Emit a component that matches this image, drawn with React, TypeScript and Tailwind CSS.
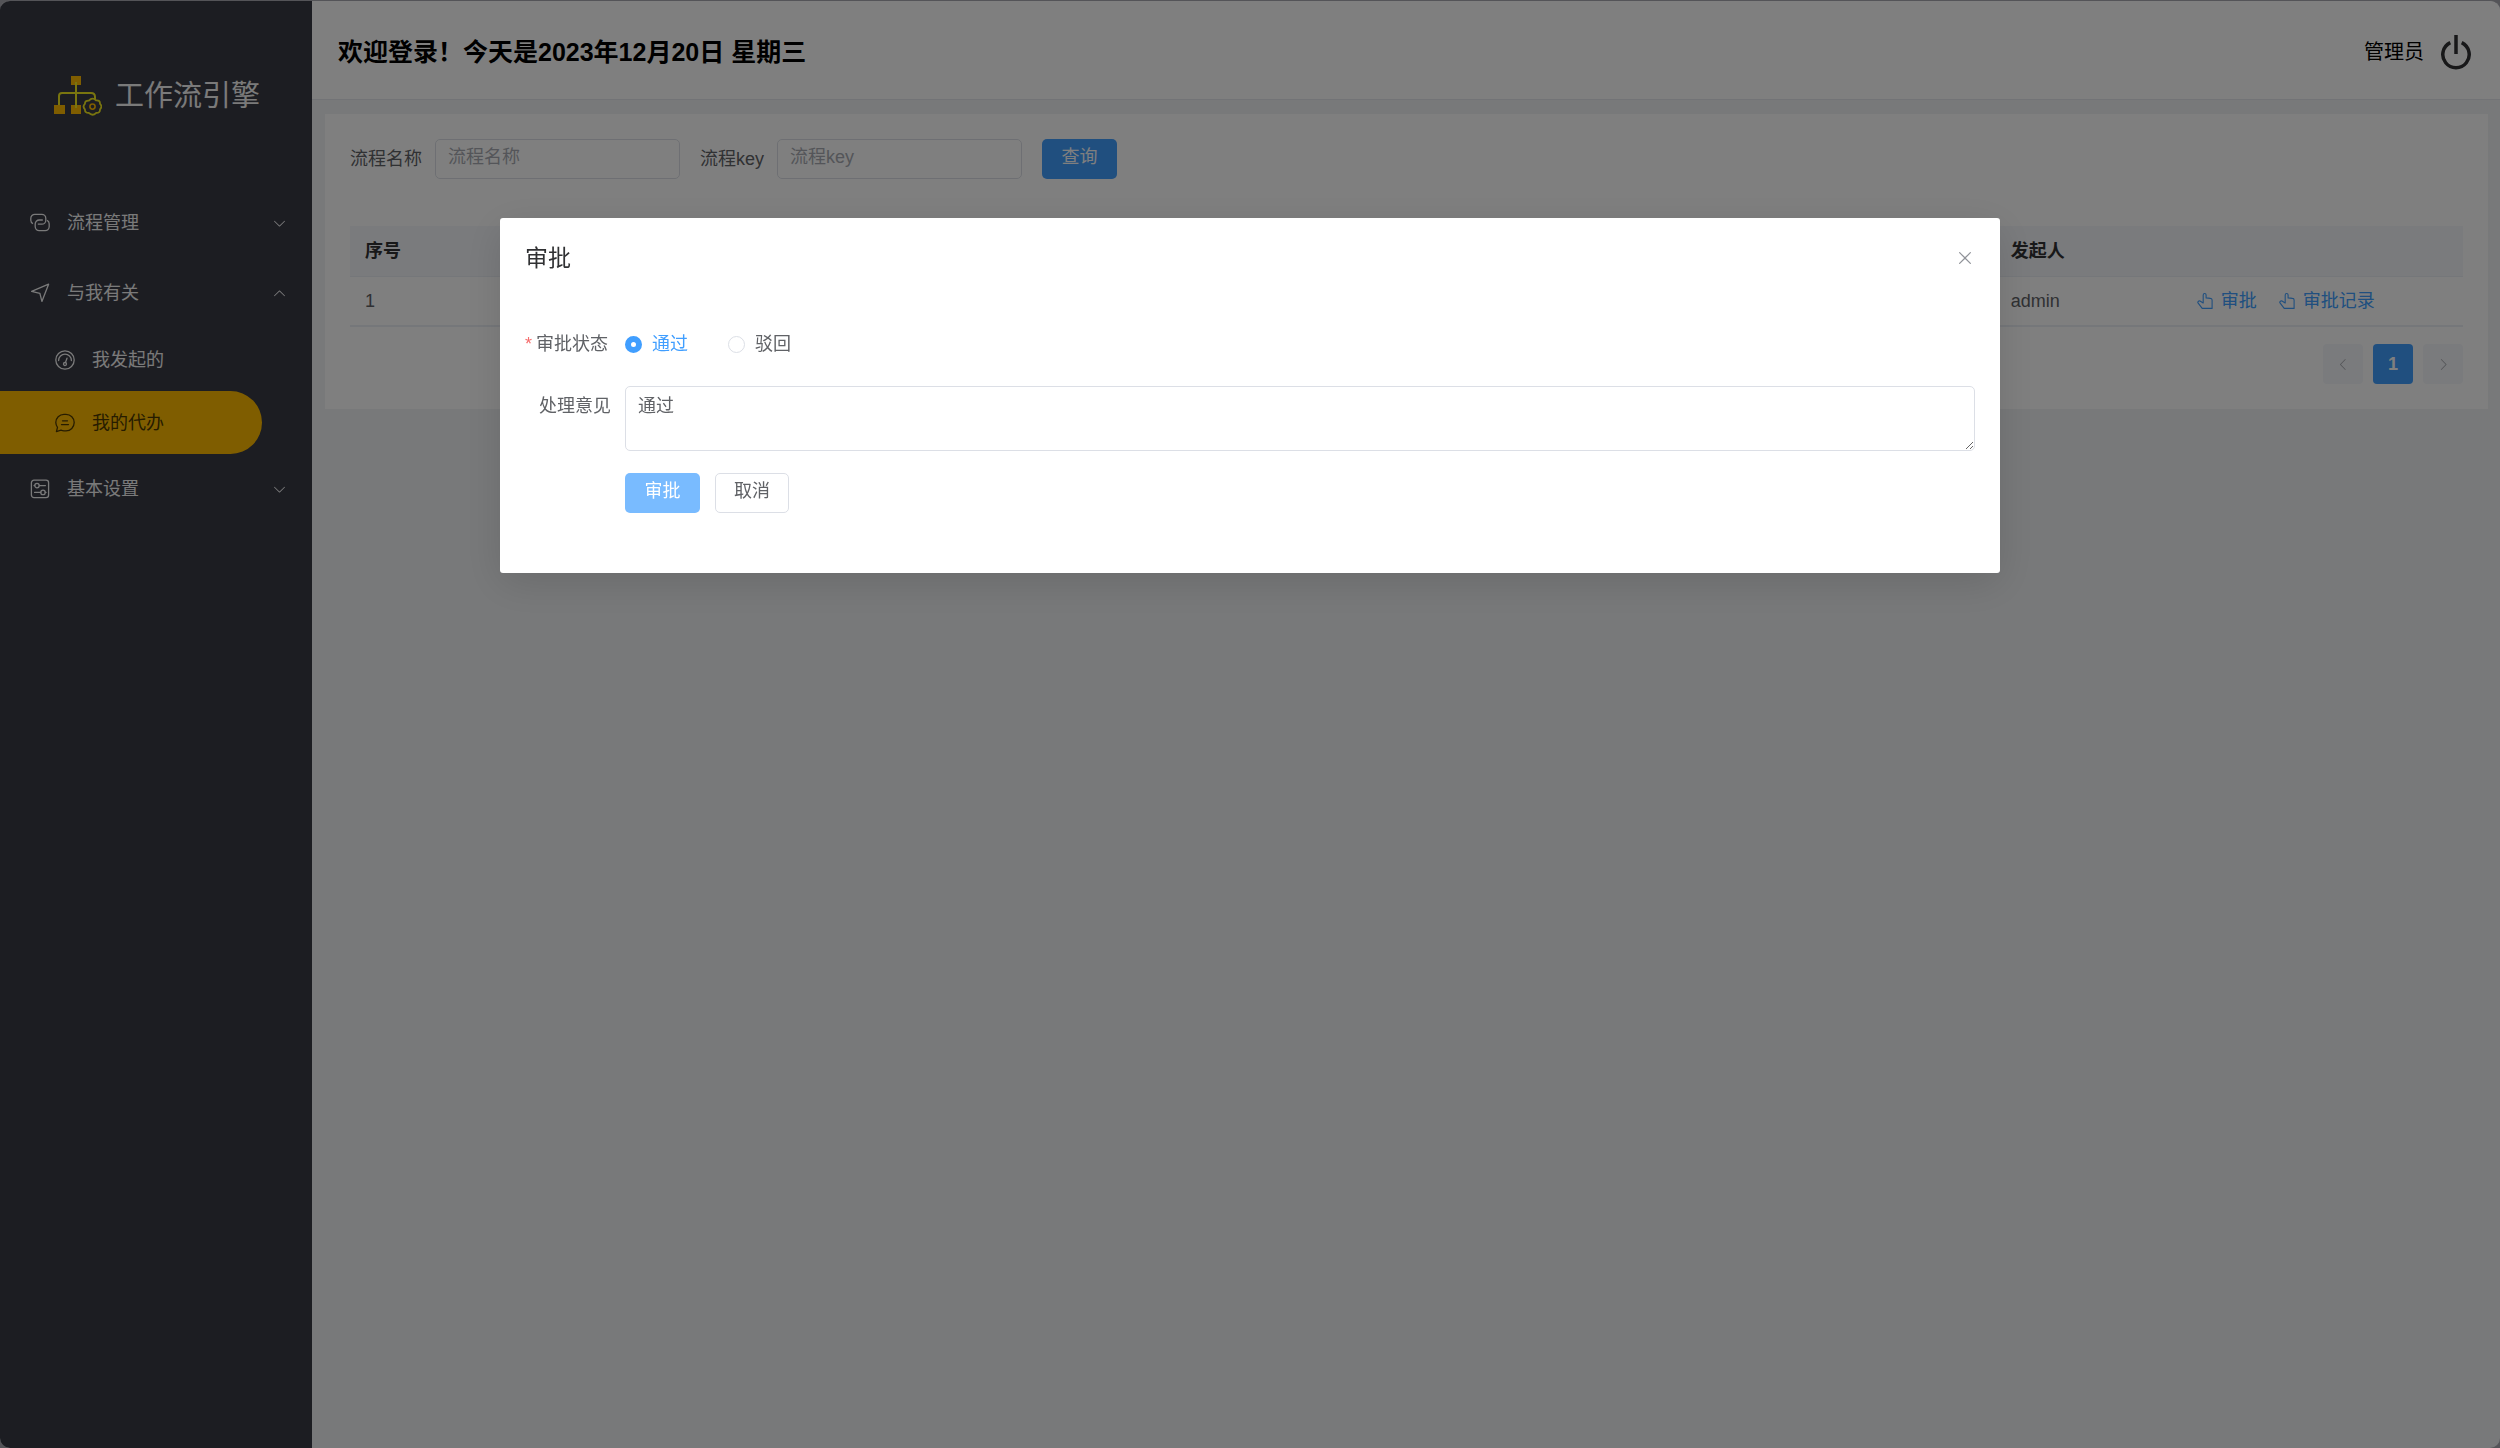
import { useState } from "react";
import type { ReactNode } from "react";

function Icon({ className, d }: { className: string; d: string }) {
  return (
    <svg viewBox="0 0 1024 1024" fill="currentColor" aria-hidden="true" className={className}>
      <path d={d} />
    </svg>
  );
}

const ARROW_DOWN = "M831.872 340.864 512 652.672 192.128 340.864a30.592 30.592 0 0 0-42.752 0 29.12 29.12 0 0 0 0 41.6L489.664 714.24a32 32 0 0 0 44.672 0l340.288-331.712a29.12 29.12 0 0 0 0-41.728 30.592 30.592 0 0 0-42.752 0z";
const ARROW_LEFT = "M609.408 149.376 277.76 489.6a32 32 0 0 0 0 44.672l331.648 340.352a29.12 29.12 0 0 0 41.728 0 30.592 30.592 0 0 0 0-42.752L339.264 511.936l311.872-319.872a30.592 30.592 0 0 0 0-42.688 29.12 29.12 0 0 0-41.728 0z";
const ARROW_RIGHT = "M340.864 149.312a30.592 30.592 0 0 0 0 42.752L652.736 512 340.864 831.872a30.592 30.592 0 0 0 0 42.752 29.12 29.12 0 0 0 41.728 0L714.24 534.336a32 32 0 0 0 0-44.672L382.592 149.376a29.12 29.12 0 0 0-41.728 0z";
const CLOSE = "M764.288 214.592 512 466.88 259.712 214.592a31.936 31.936 0 0 0-45.12 45.12L466.752 512 214.528 764.224a31.936 31.936 0 1 0 45.12 45.184L512 557.184l252.288 252.288a31.936 31.936 0 0 0 45.12-45.12L557.12 512.064l252.288-252.352a31.936 31.936 0 1 0-45.12-45.184z";

const navIcon = "size-5 shrink-0";

function LinkIcon() {
  return (
    <svg viewBox="0 0 20 20" fill="none" stroke="currentColor" strokeWidth="1.3" aria-hidden="true" className={navIcon}>
      <path d="M3 10.6A3.800 3.800 0 0 1 .8 7.200V5.400a4 4 0 0 1 4-4h7a4 4 0 0 1 4 4v1.800a4 4 0 0 1-4 4H7.800" />
      <path d="M17 7.400a3.800 3.800 0 0 1 2.200 3.400v2.800a4 4 0 0 1-4 4h-6a4 4 0 0 1-4-4V11a4 4 0 0 1 4-4h3.600" />
    </svg>
  );
}

function SendIcon() {
  return (
    <svg viewBox="0 0 20 20" fill="none" stroke="currentColor" strokeWidth="1.3" strokeLinejoin="round" aria-hidden="true" className={navIcon}>
      <path d="M1.6 8.4 18.6 1.2 11.9 18.4 9.9 10.3Z" />
    </svg>
  );
}

function GaugeIcon() {
  return (
    <svg viewBox="0 0 20 20" fill="none" stroke="currentColor" strokeWidth="1.3" strokeLinecap="round" aria-hidden="true" className={navIcon}>
      <circle cx="10" cy="10" r="9.2" />
      <path d="M3.6 10.6a6.4 6.4 0 0 1 12.8 0" />
      <circle cx="10" cy="14" r="1.5" />
      <path d="M10.5 12.4 12 8.2" />
    </svg>
  );
}

function ChatIcon() {
  return (
    <svg viewBox="0 0 20 20" fill="none" stroke="currentColor" strokeWidth="1.3" strokeLinecap="round" strokeLinejoin="round" aria-hidden="true" className={navIcon}>
      <path d="M2.5 14.3A8 8 0 0 1 .8 9.6C.8 5 4.4 1.4 9 1.4h2c4.6 0 8.2 3.6 8.2 8.2S15.6 17.8 11 17.8H9a9 9 0 0 1-3-.6L1.4 18.6Z" />
      <path d="M7.500 7.800h5M6.500 11.600h7" />
    </svg>
  );
}

function SetIcon() {
  return (
    <svg viewBox="0 0 20 20" fill="none" stroke="currentColor" strokeWidth="1.3" strokeLinecap="round" aria-hidden="true" className={navIcon}>
      <rect x="1.4" y="1.2" width="17.2" height="17.4" rx="2.6" />
      <circle cx="7" cy="6.6" r="2.2" />
      <circle cx="13" cy="13.4" r="2.2" />
      <path d="M9.400 6.600h6M4.600 13.400h6M4 6.600h.6M15.400 13.400h.6" />
    </svg>
  );
}

function PointerIcon() {
  return (
    <svg viewBox="0 0 16 16" fill="none" stroke="currentColor" strokeWidth="1.1" strokeLinejoin="round" aria-hidden="true" className="size-4">
      <path d="M6.200 10V2a1.400 1.400 0 0 1 2.900 0v2.900l4.400.5a1.700 1.700 0 0 1 1.600 1.700v8.300H5.200L.8 9.700A1.600 1.600 0 0 1 3 8Z" />
    </svg>
  );
}

function Logo() {
  return (
    <svg viewBox="0 0 48 40" fill="none" aria-hidden="true" className="h-10 w-12 shrink-0">
      <path fill="#ffbb00" d="M17 0h10v9H17zM0 29h11v9H0zM17 29h10v9H17z" />
      <path stroke="#f2ea1e" strokeWidth="2" d="M22 6v26M5 29V20q0-3 3-3h29q4 0 4 4v2" />
      <path
        stroke="#f2ea1e"
        strokeWidth="1.8"
        strokeLinejoin="round"
        fill="#383a44"
        d="M34.9 24.6Q38.5 20.8 42 24.4Q46.2 24 46 27.8Q48.8 30.5 46 33.4Q46.2 37 42.2 36.8Q38.5 40.5 34.8 36.9Q31 37.2 30.9 33.4Q28.2 30.6 30.9 27.8Q31 24.4 34.9 24.6Z"
      />
      <circle cx="38.5" cy="30.6" r="2.6" stroke="#ffbb00" strokeWidth="1.6" />
    </svg>
  );
}

function MenuGroup({ icon, label, open }: { icon: ReactNode; label: string; open?: boolean }) {
  return (
    <button type="button" aria-expanded={!!open} className="flex h-[70px] w-full items-center pr-[25px] pl-[30px] text-left">
      {icon}
      <span className="ml-[17px] flex-1">{label}</span>
      <Icon d={ARROW_DOWN} className={open ? "size-[15px] rotate-180" : "size-[15px]"} />
    </button>
  );
}

function MenuItem({ icon, label, active }: { icon: ReactNode; label: string; active?: boolean }) {
  return (
    <a
      href="#"
      aria-current={active ? "page" : undefined}
      className={
        active
          ? "mr-[50px] flex h-[63px] items-center rounded-r-full bg-[#ffbb00] pl-[55px] text-[#4d3800]"
          : "mr-[50px] flex h-[63px] items-center pl-[55px]"
      }
    >
      {icon}
      <span className="ml-[17px]">{label}</span>
    </a>
  );
}

function Sidebar() {
  return (
    <aside className="w-[312px] shrink-0 bg-[#383a44] text-[#f4f4f5]">
      <div className="flex h-[187px] items-center gap-[13px] pt-0.5 pl-[54px]">
        <Logo />
        <span className="text-[29px]">工作流引擎</span>
      </div>
      <nav>
        <MenuGroup icon={<LinkIcon />} label="流程管理" />
        <MenuGroup icon={<SendIcon />} label="与我有关" open />
        <MenuItem icon={<GaugeIcon />} label="我发起的" />
        <MenuItem icon={<ChatIcon />} label="我的代办" active />
        <MenuGroup icon={<SetIcon />} label="基本设置" />
      </nav>
    </aside>
  );
}

function Header() {
  return (
    <header className="flex h-[99px] items-center justify-between border-b border-[#e4e7ed] bg-white pt-[3px] pr-7 pl-[26px] text-black">
      <h1 className="text-[25px] font-bold">欢迎登录！今天是2023年12月20日 星期三</h1>
      <div className="flex items-center gap-4">
        <span className="text-xl">管理员</span>
        <button type="button" aria-label="退出">
          <svg viewBox="0 0 32 36" fill="none" stroke="#303133" strokeWidth="3.5" aria-hidden="true" className="h-9 w-8">
            <path d="M10.3 8.6A13.2 13.2 0 1 0 21.7 8.6M16 1v19" />
          </svg>
        </button>
      </div>
    </header>
  );
}

function SearchField({ id, label }: { id: string; label: string }) {
  return (
    <div className="flex items-center">
      <label htmlFor={id} className="pr-[13px]">
        {label}
      </label>
      <input
        id={id}
        placeholder={label}
        className="h-10 w-[245px] rounded-[5px] border border-[#dcdfe6] bg-white px-3 pb-1 placeholder:text-[#a8abb2]"
      />
    </div>
  );
}

function RowAction({ label }: { label: string }) {
  return (
    <button type="button" className="flex items-center gap-2">
      <PointerIcon />
      {label}
    </button>
  );
}

function PageContent() {
  return (
    <main className="mt-[14px] mr-[12px] mb-[13px] ml-[13px] bg-white p-[25px]">
      <form className="flex items-center gap-5" onSubmit={(e) => e.preventDefault()}>
        <SearchField id="name" label="流程名称" />
        <SearchField id="key" label="流程key" />
        <button type="submit" className="h-10 w-[75px] rounded-[5px] bg-[#409eff] pb-1 text-white">
          查询
        </button>
      </form>
      <table className="mt-[47px] w-full table-fixed text-left">
        <thead>
          <tr className="h-[50px] border-b border-[#ebeef5] bg-[#f5f7fa] text-[#303133]">
            <th className="w-[78.6%] px-[15px] font-bold">序号</th>
            <th className="w-[8.8%] font-bold">发起人</th>
            <td />
          </tr>
        </thead>
        <tbody>
          <tr className="h-[50px] border-b-2 border-[#ebeef5]">
            <td className="px-[15px]">1</td>
            <td>admin</td>
            <td>
              <div className="flex gap-[22px] text-[#409eff]">
                <RowAction label="审批" />
                <RowAction label="审批记录" />
              </div>
            </td>
          </tr>
        </tbody>
      </table>
      <div className="mt-[17px] flex justify-end gap-[10px]">
        <button type="button" aria-label="上一页" disabled className="flex h-10 w-10 items-center justify-center rounded-sm bg-[#f5f7fa] text-[#a8abb2]">
          <Icon d={ARROW_LEFT} className="size-[15px]" />
        </button>
        <button type="button" className="h-10 w-10 rounded-sm bg-[#409eff] font-bold text-white">
          1
        </button>
        <button type="button" aria-label="下一页" disabled className="flex h-10 w-10 items-center justify-center rounded-sm bg-[#f5f7fa] text-[#a8abb2]">
          <Icon d={ARROW_RIGHT} className="size-[15px]" />
        </button>
      </div>
    </main>
  );
}

function ApprovalDialog() {
  const [status, setStatus] = useState("pass");
  const [comment, setComment] = useState("通过");
  const options = [
    { value: "pass", label: "通过" },
    { value: "reject", label: "驳回" },
  ];
  return (
    <div className="fixed inset-0 bg-black/50">
      <section
        role="dialog"
        aria-label="审批"
        className="mx-auto mt-[218px] w-3/5 rounded-[3px] bg-white px-[25px] pt-[25px] pb-[60px] shadow-[0_10px_40px_rgba(0,0,0,0.12)]"
      >
        <div className="flex h-[30px] items-center justify-between">
          <h2 className="text-[23px] text-[#303133]">审批</h2>
          <button type="button" aria-label="关闭" className="text-[#909399]">
            <Icon d={CLOSE} className="size-5" />
          </button>
        </div>
        <form className="mt-[51px]" onSubmit={(e) => e.preventDefault()}>
          <fieldset className="flex h-10 items-center">
            <legend className="float-left w-[100px] shrink-0">
              <span className="mr-1 text-[#f56c6c]">*</span>
              审批状态
            </legend>
            {options.map((o) => (
              <label key={o.value} className="mr-10 flex items-center gap-[10px] has-checked:text-[#409eff]">
                <input
                  type="radio"
                  name="status"
                  value={o.value}
                  checked={status === o.value}
                  onChange={() => setStatus(o.value)}
                  className="size-[17px] appearance-none rounded-full border border-[#dcdfe6] bg-white checked:border-[6px] checked:border-[#409eff]"
                />
                {o.label}
              </label>
            ))}
          </fieldset>
          <div className="mt-[22px] flex">
            <label htmlFor="comment" className="w-[100px] shrink-0 pt-[6px] pr-[14px] text-right">
              处理意见
            </label>
            <textarea
              id="comment"
              value={comment}
              onChange={(e) => setComment(e.target.value)}
              className="h-[65px] flex-1 rounded-[5px] border border-[#dcdfe6] px-3 py-[5px]"
            />
          </div>
          <div className="mt-[22px] flex gap-[15px] pl-[100px]">
            <button type="submit" className="h-10 w-[75px] rounded-[5px] bg-[#79bbff] pb-1 text-white">
              审批
            </button>
            <button type="button" className="h-10 w-[74px] rounded-[5px] border border-[#dcdfe6] bg-white pb-1">
              取消
            </button>
          </div>
        </form>
      </section>
    </div>
  );
}

export default function App() {
  return (
    <div className="min-h-screen bg-[#a9a9b0] font-['Liberation_Sans','Noto_Sans_CJK_SC',sans-serif] text-[18px] leading-[28px] text-[#606266]">
      <div className="flex min-h-screen overflow-hidden rounded-[10px] border-t border-[#a9a9b0] bg-[#f0f2f5]">
        <Sidebar />
        <div className="min-w-0 flex-1">
          <Header />
          <PageContent />
        </div>
      </div>
      <ApprovalDialog />
    </div>
  );
}
